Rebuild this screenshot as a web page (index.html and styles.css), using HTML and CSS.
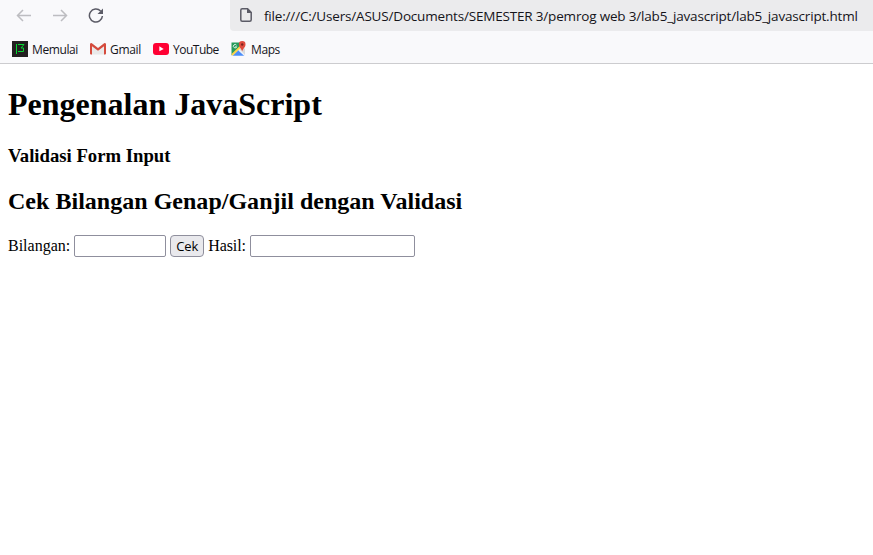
FILE: index.html
```html
<!DOCTYPE html>
<html lang="id">
<head>
<meta charset="utf-8">
<title>Pengenalan JavaScript</title>
<link rel="stylesheet" href="styles.css">
</head>
<body>
<header class="chrome">
  <div class="toolbar">
    <nav class="nav">
      <svg width="16" height="16" viewBox="0 0 16 16" class="icon dim"><path d="M15 7.500H1.500M7 2L1.500 7.500 7 13"/></svg>
      <svg width="16" height="16" viewBox="0 0 16 16" class="icon dim"><path d="M1 7.500h13.500M9 2l5.500 5.500L9 13"/></svg>
      <svg width="16" height="16" viewBox="0 0 16 16" class="icon reload"><path d="M12.600 3A6.500 6.500 0 1 0 14.400 8"/><path class="solid" d="M15 .5v5.500H9.500z"/></svg>
    </nav>
    <div class="address">
      <svg width="12" height="14" viewBox="0 0 12 14" class="icon page"><path d="M2.200.8h5.300l3.700 3.700v7.200q0 1.500-1.500 1.500H2.200Q.8 13.200.8 11.700V2.300Q.8.8 2.200.8z"/><path class="solid" d="M7 .8V5h4.500V4L8 .5z"/></svg>
      <span class="url">file:///C:/Users/ASUS/Documents/SEMESTER 3/pemrog web 3/lab5_javascript/lab5_javascript.html</span>
    </div>
  </div>
  <div class="bookmarks">
    <a class="bookmark memulai"><svg width="16" height="16" viewBox="0 0 16 16"><path fill="#231f20" d="M0 0h16v16H0z"/><path fill="none" stroke="#06d832" d="M4.500 3v10M6 3.500h6L9 7h2.500v3.500H6"/></svg><span>Memulai</span></a>
    <a class="bookmark gmail"><svg width="16" height="16" viewBox="0 0 16 16"><path fill="#e9e9e9" d="M1 2.500h14v11H1z"/><path fill="#fafafa" d="M2.500 2.500h11L8 7z"/><path fill="#d54b3d" d="M0 3.300Q0 2 1.500 2L8 7l6.500-5Q16 2 16 3.300v9.200q0 1-1 1h-1V5.200L8 9.800 2 5.200v8.300H1q-1 0-1-1z"/></svg><span>Gmail</span></a>
    <a class="bookmark youtube"><svg width="16" height="16" viewBox="0 0 16 16"><rect y="2" width="16" height="12" rx="3" fill="#ff0033"/><path fill="#fff" d="M6.300 5.300v5L10.700 8z"/></svg><span>YouTube</span></a>
    <a class="bookmark maps"><svg width="16" height="16" viewBox="0 0 16 16"><path fill="#269a5b" d="M.5 1.500h11l-5 8-6 5z"/><path fill="#4b8df8" d="M1.500 14.800 7.500 9l6 5.800z"/><path fill="#dadada" d="m8 8 4-2 2 2v6z"/><path fill="none" stroke="#fcd248" stroke-width="2" d="M1 14 11.500 3.800"/><path fill="none" stroke="#fff" stroke-width=".8" d="m7.500 9.200 6 5.500"/><path fill="none" stroke="#e3f4e9" d="M5.500 4.200a1.700 1.700 0 1 0 .2 1.600H4.200"/><path fill="#df4b3e" d="M11.200 10.500C10.700 7.500 7.900 6.500 7.900 3.400a3.300 3.300 0 0 1 6.600 0c0 3.100-2.800 4.100-3.300 7.100z"/><circle cx="11.200" cy="3.500" r="1.200" fill="#7d231e"/></svg><span>Maps</span></a>
  </div>
</header>
<main class="content">
  <h1>Pengenalan JavaScript</h1>
  <h3>Validasi Form Input</h3>
  <h2>Cek Bilangan Genap/Ganjil dengan Validasi</h2>
  <form class="form">
    <label for="bilangan">Bilangan:</label>
    <input id="bilangan" class="field short" type="text">
    <button class="check" type="button">Cek</button>
    <label for="hasil" class="result-label">Hasil:</label>
    <input id="hasil" class="field long" type="text">
  </form>
</main>
</body>
</html>
```
FILE: styles.css
```css
* { box-sizing: border-box; }
body {
  margin: 0;
  background: #fff;
  color: #000;
  font-family: "Liberation Serif", serif;
  font-size: 16px;
  overflow: hidden;
}
.chrome {
  height: 64px;
  background: #f9f9fb;
  border-bottom: 1px solid #cccccf;
  font-family: "Open Sans", "Noto Sans", sans-serif;
  color: #15141a;
}
.toolbar { display: flex; height: 31px; }
.nav {
  display: flex;
  gap: 20px;
  width: 230px;
  padding: 8px 0 0 16px;
}
.icon { fill: none; stroke: #5b5b66; stroke-width: 1.5; flex: none; }
.icon .solid { fill: #5b5b66; stroke: none; }
.dim { stroke: #bdbdc1; }
.address {
  flex: 1;
  display: flex;
  align-items: center;
  gap: 12px;
  padding-left: 10px;
  background: #ebebed;
  border-radius: 0 0 0 4px;
  white-space: nowrap;
}
.page { margin-top: -1px; }
.url { font-size: 13.5px; letter-spacing: -0.18px; line-height: 31px; padding-top: 1px; }
.bookmarks { display: flex; height: 32px; padding: 4px 0 0 12px; }
.bookmark {
  display: flex;
  align-items: center;
  gap: 4px;
  font-size: 12px;
  letter-spacing: -0.4px;
  white-space: nowrap;
}
.bookmark svg { flex: none; }
.memulai { width: 78px; }
.gmail { width: 63px; letter-spacing: -0.3px; }
.youtube { width: 78px; letter-spacing: -0.5px; }
.content { padding: 0 8px; }
h1, h2, h3 { margin: 0; white-space: nowrap; }
h1 { font-size: 32px; line-height: 37px; padding-top: 22px; }
h3 { font-size: 18.72px; line-height: 21px; padding-top: 22px; }
h2 { font-size: 24px; line-height: 28px; padding-top: 21px; letter-spacing: 0.02px; }
.form { display: flex; align-items: center; gap: 4px; height: 22px; margin-top: 20px; }
.result-label { width: 38px; letter-spacing: -0.1px; }
.field {
  height: 22px;
  margin: 0;
  border: 1px solid #8f8f9d;
  border-radius: 2px;
  background: #fff;
}
.short { width: 92px; }
.long { width: 165px; }
.check {
  width: 34px;
  height: 22px;
  padding: 0;
  border: 1px solid #8f8f9d;
  border-radius: 4px;
  background: #e9e9ed;
  color: #000;
  font: 13px "Open Sans", "Noto Sans", sans-serif;
  letter-spacing: -0.2px;
}
```
